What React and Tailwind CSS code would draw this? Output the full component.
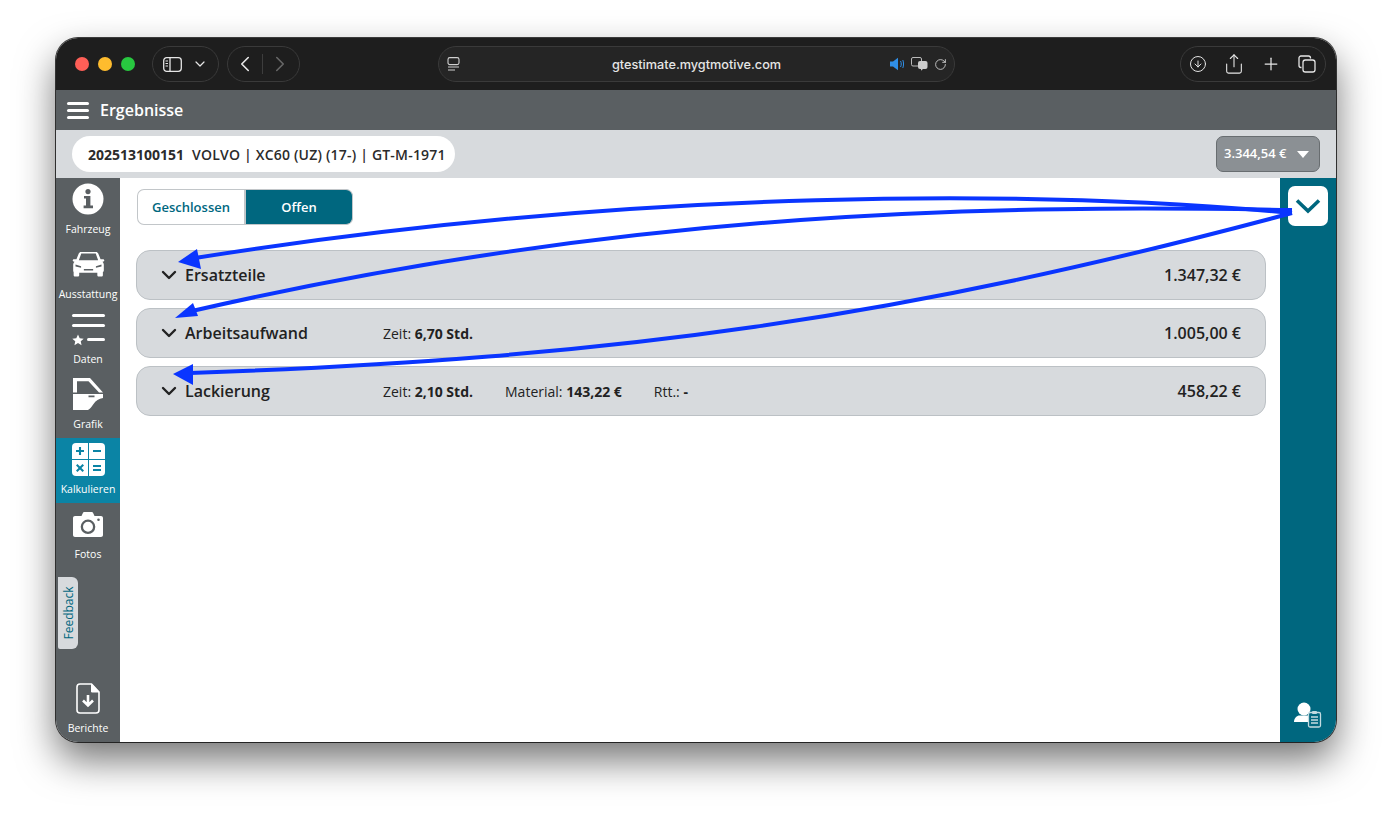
import { ChevronDown, ChevronLeft, ChevronRight, Plus, RotateCw, Share, ArrowDownCircle } from 'lucide-react'

const navItems = [
  { label: 'Fahrzeug', icon: <InfoIcon /> },
  { label: 'Ausstattung', icon: <CarIcon /> },
  { label: 'Daten', icon: <ListIcon /> },
  { label: 'Grafik', icon: <DoorIcon /> },
  { label: 'Kalkulieren', icon: <CalcIcon />, active: true },
  { label: 'Fotos', icon: <CameraIcon /> },
]

function InfoIcon() {
  return (
    <svg width="32" height="32" viewBox="0 0 32 32">
      <circle cx="16" cy="16" r="15.5" fill="#fff" />
      <circle cx="16" cy="8.6" r="2.6" fill="#5a5f62" />
      <path d="M12 13h6.4v9.6H21v2.6H11.6v-2.6h2.4v-7H12z" fill="#5a5f62" />
    </svg>
  )
}

function CarIcon() {
  return (
    <svg width="33" height="26" viewBox="0 0 34 28" fill="#fff">
      <path fillRule="evenodd" d="M9 1h16c1.200 0 2 .6 2.500 1.700L30 9h2.500c.8 0 1.500.5 1.500 1.200s-.7 1.300-1.500 1.300H32c1 1 1.500 2 1.500 3.500V21c0 .8-.3 1.300-1 1.600V26c0 1-.7 1.500-1.500 1.500h-3c-.8 0-1.500-.5-1.500-1.500v-2.500H7V26c0 1-.7 1.500-1.500 1.500h-3C1.700 27.500 1 27 1 26v-3.400C.7 22.300.5 21.800.5 21v-6c0-1.500.5-2.500 1.500-3.500h-.5C.7 11.500 0 10.900 0 10.200S.7 9 1.500 9H4l2.500-6.300C7 1.600 7.800 1 9 1zm.2 1.800L6.600 10h20.800l-2.600-7.200zM3 14.500v2.200l6 1.300v-1.500zm28 0l-6 2V18l6-1.300zM12 19.500v1.500h10v-1.500z" />
    </svg>
  )
}

function ListIcon() {
  return (
    <div className="w-[33px] flex flex-col gap-[7.500px]">
      <div className="h-[3px] bg-white rounded-sm" />
      <div className="h-[3px] bg-white rounded-sm" />
      <div className="flex items-center gap-[3px] h-[10px]">
        <svg width="12" height="12" viewBox="0 0 24 24" fill="#fff"><path d="M12 1l3.400 7.300 8 1-5.900 5.400 1.600 7.900L12 18l-7.100 4.600 1.600-7.900L.6 9.300l8-1z" /></svg>
        <div className="h-[3px] flex-1 bg-white rounded-sm" />
      </div>
    </div>
  )
}

function DoorIcon() {
  return (
    <svg width="30" height="32" viewBox="0 0 30 32" fill="#fff">
      <path d="M0 0H17L30 14.500H26L15.500 3.200H4V14.500H0z" />
      <path fillRule="evenodd" d="M0 16H30V20C26 20.500 22.500 23 20.500 26C18.500 29 17 31 15 32H0zM15.500 17.500v1.800h6v-1.800z" />
    </svg>
  )
}

function CalcIcon() {
  return (
    <div className="w-[33px] h-[33px] grid grid-cols-2 gap-[1px] rounded-[4px] overflow-hidden">
      <div className="bg-white flex items-center justify-center text-[#0b84a5]">
        <svg width="8" height="8" viewBox="0 0 10 10" fill="currentColor"><path d="M3.700 0h2.600v3.700H10v2.600H6.300V10H3.700V6.300H0V3.700h3.700z" /></svg>
      </div>
      <div className="bg-white flex items-center justify-center">
        <div className="w-[8px] h-[2px] bg-[#0b84a5]" />
      </div>
      <div className="bg-white flex items-center justify-center text-[#0b84a5]">
        <svg width="8" height="8" viewBox="0 0 10 10" fill="currentColor"><path d="M1.800 0L5 3.200 8.200 0 10 1.800 6.800 5 10 8.200 8.200 10 5 6.800 1.800 10 0 8.200 3.200 5 0 1.800z" /></svg>
      </div>
      <div className="bg-white flex flex-col items-center justify-center gap-[2px]">
        <div className="w-[8px] h-[2px] bg-[#0b84a5]" />
        <div className="w-[8px] h-[2px] bg-[#0b84a5]" />
      </div>
    </div>
  )
}

function CameraIcon() {
  return (
    <svg width="30" height="25" viewBox="0 0 30 25" fill="#fff">
      <path fillRule="evenodd" d="M2 4h6.500L10 .8C10.200.3 10.600 0 11.200 0h7.600c.6 0 1 .3 1.200.8L21.500 4H28c1.100 0 2 .9 2 2v17c0 1.100-.9 2-2 2H2c-1.100 0-2-.9-2-2V6c0-1.100.9-2 2-2zm13 3.500a7.300 7.300 0 1 0 0 14.600 7.300 7.300 0 0 0 0-14.600zm0 2.300a5 5 0 1 1 0 10 5 5 0 0 1 0-10zM25.500 6.500a1.300 1.300 0 1 0 0 2.600 1.300 1.300 0 0 0 0-2.600z" />
    </svg>
  )
}

function ReportIcon() {
  return (
    <svg width="24" height="31" viewBox="0 0 24 31" fill="none" stroke="#fff">
      <path d="M4 1h11.500L23 9v18c0 1.700-1.300 3-3 3H4c-1.700 0-3-1.300-3-3V4c0-1.700 1.300-3 3-3z" strokeWidth="1.600" />
      <path d="M15.500 1v8H23z" fill="#fff" strokeWidth="1" />
      <path d="M12 12v10.500M7 17.500l5 5 5-5" strokeWidth="2.600" />
    </svg>
  )
}

function UserClipboardIcon() {
  return (
    <svg width="28" height="26" viewBox="0 0 28 26">
      <circle cx="10" cy="7" r="6.500" fill="#fff" />
      <path d="M0 20c0-4 3-6.500 5.500-6.500h9c2 0 3.500 1 4 2.500L14 20z" fill="#fff" />
      <rect x="14.500" y="10.500" width="12" height="14.500" rx="1.500" fill="#00677f" stroke="#c3dbe1" strokeWidth="1.300" />
      <rect x="18" y="9" width="5" height="3" rx="1" fill="#c3dbe1" />
      <path d="M17 15h7M17 18h7M17 21h7" stroke="#c3dbe1" strokeWidth="1.300" />
    </svg>
  )
}

function Arrows() {
  return (
    <svg className="absolute inset-0 pointer-events-none" width="1392" height="816" viewBox="0 0 1392 816" fill="none">
      <path d="M1292 213C1040 190 640 187 195 258" stroke="#0a35ff" strokeWidth="4" />
      <path d="M1292 210C1000 205 640 208 192 311" stroke="#0a35ff" strokeWidth="4" />
      <path d="M1292 213C900 318 620 358 190 373" stroke="#0a35ff" strokeWidth="4" />
      <path d="M178 262L197 249L201 269z" fill="#0a35ff" />
      <path d="M175 318L193 303L198 316z" fill="#0a35ff" />
      <path d="M173 374L193 364L193 385z" fill="#0a35ff" />
    </svg>
  )
}

function Row({ title, total, children }) {
  return (
    <div className="h-[50px] flex items-center rounded-[14px] border border-[#bcc1c5] bg-[#d7dadd] pl-[20px] pr-[24px] text-[#222]">
      <ChevronDown size={24} strokeWidth={2.400} className="shrink-0" />
      <div className="ml-[4px] w-[198px] text-[16px] font-semibold">{title}</div>
      <div className="flex-1 flex items-center gap-[32px] text-[14px]">{children}</div>
      <div className="text-[16px] font-semibold">{total}</div>
    </div>
  )
}

export default function App() {
  return (
    <div className="relative w-[1392px] h-[816px] bg-white overflow-hidden pl-[56px] pt-[38px] font-['Open_Sans',sans-serif]">
      <div className="w-[1280px] h-[704px] rounded-[22px] overflow-hidden flex flex-col shadow-[0_0_0_1px_rgba(0,0,0,0.75),0_18px_38px_rgba(0,0,0,0.55)]">
        {/* safari bar */}
        <div className="h-[52px] shrink-0 bg-[#1e1e1e] flex items-center pl-[19px] pr-[10px] text-[#e6e6e6]">
          <div className="flex gap-[9px]">
            <div className="w-[14px] h-[14px] rounded-full bg-[#fe5f57]" />
            <div className="w-[14px] h-[14px] rounded-full bg-[#febc2e]" />
            <div className="w-[14px] h-[14px] rounded-full bg-[#28c840]" />
          </div>
          <div className="ml-[17px] w-[67px] h-[36px] rounded-full border border-[#3a3a3a] flex items-center pl-[10px]">
            <svg width="19" height="15" viewBox="0 0 19 15" fill="none" stroke="#e6e6e6" strokeWidth="1.300"><rect x=".7" y=".7" width="17.600" height="13.600" rx="3" /><path d="M7 1v13" /><path d="M2.500 4h2.500M2.500 6.500h2.500M2.500 9h2.500" strokeWidth="1" /></svg>
            <ChevronDown size={16} strokeWidth={1.800} className="ml-[10px]" />
          </div>
          <div className="ml-[8px] w-[73px] h-[36px] rounded-full border border-[#3a3a3a] flex items-center pl-[4px]">
            <ChevronLeft size={26} strokeWidth={1.500} className="shrink-0" />
            <div className="w-px h-[20px] bg-[#3d3d3d] ml-[4px] shrink-0" />
            <ChevronRight size={26} strokeWidth={1.500} className="ml-[4px] shrink-0 text-[#666]" />
          </div>
          <div className="relative ml-[138px] w-[517px] h-[36px] pt-[1px] rounded-full border border-[#3a3a3a] bg-[#252525] flex items-center justify-center font-['Inter',sans-serif] text-[12.700px] font-medium">
            <svg className="absolute left-[8px] top-[10px]" width="13" height="14" viewBox="0 0 13 14" fill="none" stroke="#d0d0d0" strokeWidth="1.100"><rect x="1" y=".6" width="11" height="7" rx="1.800" /><path d="M1 10h11M1 13h7" /></svg>
            gtestimate.mygtmotive.com
            <div className="absolute right-[7px] top-[10px] flex items-center gap-[6px]">
              <svg width="15" height="14" viewBox="0 0 15 14" fill="#2f8fe8"><path d="M0 4.500h3L8 .8v12.400L3 9.500H0z" /><path d="M10.500 4c1 1.800 1 4.200 0 6M12.800 3c1 2.500 1 5.500 0 8" fill="none" stroke="#2f8fe8" strokeWidth="1" /></svg>
              <svg width="17" height="14" viewBox="0 0 17 14"><rect x=".5" y=".5" width="10" height="8.500" rx="1.500" fill="none" stroke="#bbb" /><rect x="7" y="4" width="9.500" height="8" rx="2" fill="#ccc" /><path d="M10 13.800V11h3z" fill="#ccc" /></svg>
              <RotateCw size={13} strokeWidth={1.500} className="text-[#ddd]" />
            </div>
          </div>
          <div className="ml-auto w-[146px] h-[36px] rounded-full border border-[#3a3a3a] flex items-center pl-[8px]">
            <ArrowDownCircle size={18} strokeWidth={1.300} className="shrink-0" />
            <Share size={22} strokeWidth={1.200} className="ml-[16px] shrink-0" />
            <Plus size={20} strokeWidth={1.500} className="ml-[16px] shrink-0" />
            <svg className="ml-[17px] shrink-0" width="18" height="18" viewBox="0 0 18 18" fill="none" stroke="#e6e6e6" strokeWidth="1.300"><path d="M12.500 3.500V3c0-1.100-.9-2-2-2H3C1.900 1 1 1.900 1 3v7.500c0 1.100.9 2 2 2h.5" /><rect x="5" y="5" width="12" height="12" rx="2.300" /></svg>
          </div>
        </div>

        {/* app header */}
        <div className="h-[40px] shrink-0 bg-[#5a5f62] flex items-center pl-[11px] text-white">
          <div className="w-[22px] flex flex-col gap-[4px]">
            <div className="h-[3px] bg-white rounded-sm" />
            <div className="h-[3px] bg-white rounded-sm" />
            <div className="h-[3px] bg-white rounded-sm" />
          </div>
          <div className="ml-[11px] text-[16px] font-semibold">Ergebnisse</div>
        </div>

        {/* vehicle bar */}
        <div className="h-[48px] shrink-0 bg-[#d7dadd] flex items-center justify-between pl-[16px] pr-[16px]">
          <div className="h-[36px] w-[383px] rounded-full bg-white flex items-center pl-[16px] text-[14px] font-semibold text-[#2b2b2b] whitespace-nowrap">
            <span className="font-bold">202513100151</span>
            <span className="ml-[8px] tracking-[0.2px]">VOLVO | XC60 (UZ) (17-) | GT-M-1971</span>
          </div>
          <div className="w-[104px] h-[36px] rounded-[7px] border border-[#686d70] bg-[#8b9094] flex items-center pl-[7px] text-white text-[13px] font-semibold whitespace-nowrap">
            3.344,54 €
            <div className="ml-[10px] w-0 h-0 border-l-[6.500px] border-r-[6.500px] border-t-[7px] border-l-transparent border-r-transparent border-t-white" />
          </div>
        </div>

        {/* body */}
        <div className="flex-1 min-h-0 flex">
          <div className="w-[64px] shrink-0 bg-[#5a5f62] flex flex-col text-white">
            {navItems.map((item) => (
              <div key={item.label} className={`h-[65px] shrink-0 flex flex-col items-center pt-[3px] ${item.active ? 'bg-[#0b84a5]' : ''}`}>
                <div className="h-[36px] flex items-center justify-center">{item.icon}</div>
                <div className="mt-[5px] text-[10.500px] leading-[14px] whitespace-nowrap">{item.label}</div>
              </div>
            ))}
            <div className="ml-[2px] mt-[9px] w-[20px] h-[72px] pl-[1px] rounded-r-[6px] rounded-bl-[2px] bg-[#d7dadd] flex items-center justify-center">
              <span className="-rotate-90 text-[12px] text-[#00677f] whitespace-nowrap">Feedback</span>
            </div>
            <div className="mt-auto flex flex-col items-center pb-[7px]">
              <ReportIcon />
              <div className="mt-[7px] text-[10.500px] leading-[14px]">Berichte</div>
            </div>
          </div>

          <div className="flex-1 min-w-0 bg-white pt-[11px] pl-[16px] pr-[14px]">
            <div className="flex ml-[1px] w-[216px] h-[36px] pt-0 text-[13px] font-semibold">
              <div className="w-[109px] pt-[1px] flex items-center justify-center rounded-l-[7px] border border-r-2 border-[#c2c6c9] text-[#00677f]">Geschlossen</div>
              <div className="flex-1 pt-[1px] flex items-center justify-center rounded-r-[7px] border border-l-0 border-[#c2c6c9] bg-[#00677f] text-white">Offen</div>
            </div>
            <div className="mt-[25px] flex flex-col gap-[8px]">
              <Row title="Ersatzteile" total="1.347,32 €" />
              <Row title="Arbeitsaufwand" total="1.005,00 €">
                <span>Zeit: <b className="font-bold">6,70 Std.</b></span>
              </Row>
              <Row title="Lackierung" total="458,22 €">
                <span>Zeit: <b className="font-bold">2,10 Std.</b></span>
                <span>Material: <b className="font-bold">143,22 €</b></span>
                <span>Rtt.: <b className="font-bold">-</b></span>
              </Row>
            </div>
          </div>

          <div className="w-[56px] shrink-0 bg-[#00677f] flex flex-col items-center justify-between pt-[8px] pb-[14px]">
            <div className="w-[40px] h-[40px] rounded-[7px] bg-white flex items-center justify-center">
              <svg width="26" height="16" viewBox="0 0 26 16" fill="none" stroke="#00677f" strokeWidth="3.600"><path d="M2 2.500L13 13L24 2.500" /></svg>
            </div>
            <UserClipboardIcon />
          </div>
        </div>
      </div>
      <Arrows />
    </div>
  )
}
